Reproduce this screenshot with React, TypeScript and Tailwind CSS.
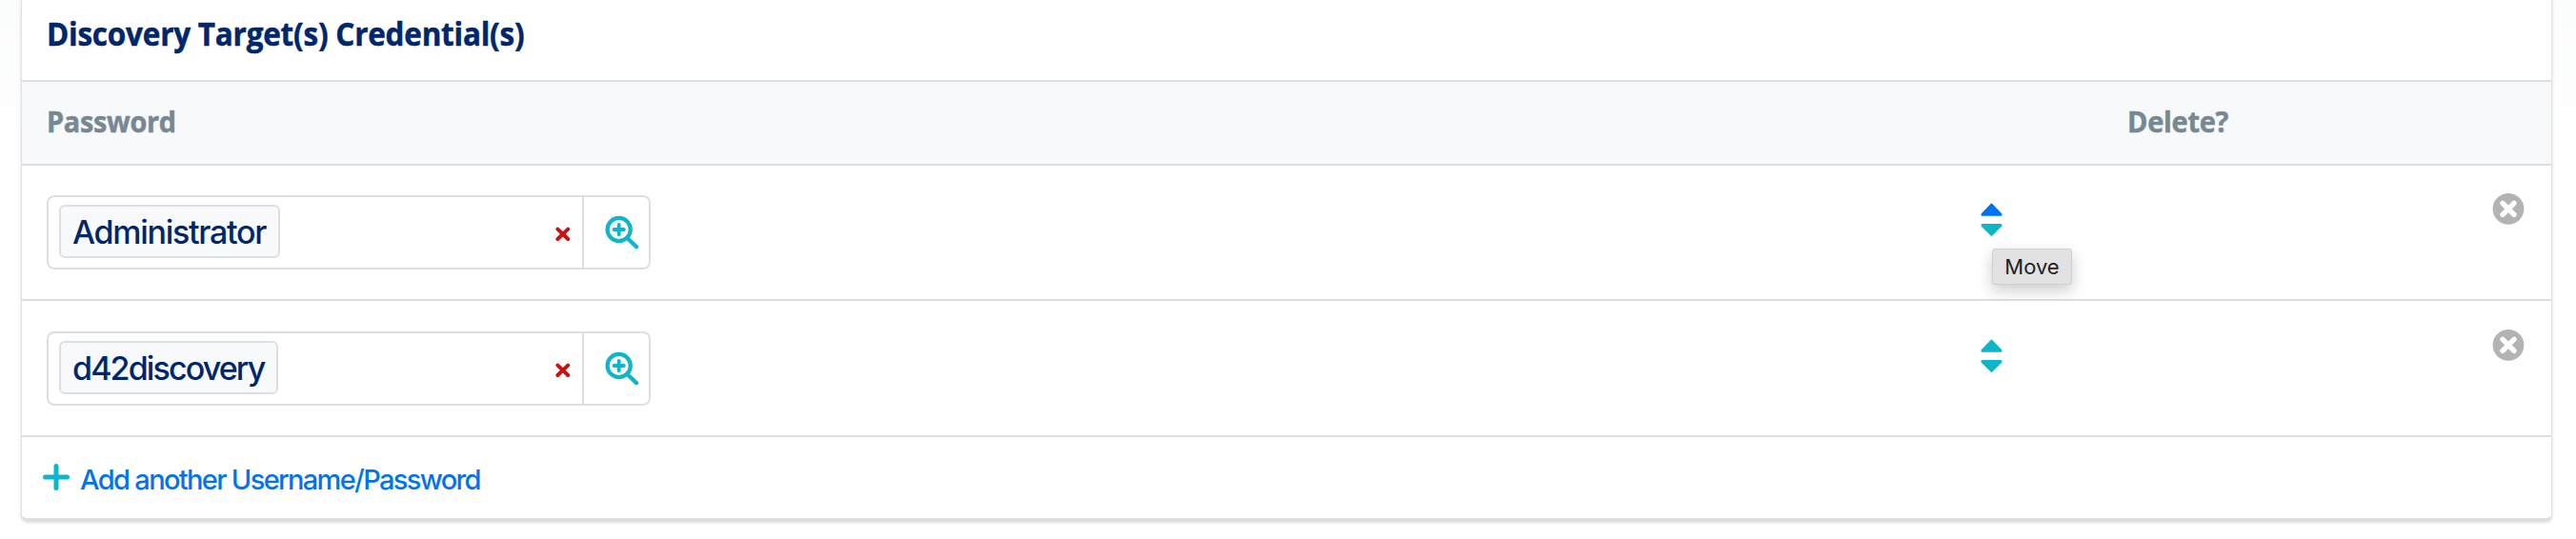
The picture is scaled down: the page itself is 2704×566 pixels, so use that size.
import React from "react";

const columns = "grid grid-cols-[2056px_154px_1fr]";

function SearchPlusIcon() {
  return (
    <svg width="36" height="36" viewBox="0 0 36 36" fill="none" stroke="#0db6c8" strokeLinecap="round">
      <circle cx="14.7" cy="15" r="12.1" strokeWidth="4.2" />
      <path d="M24 24.5 L33 33.2" strokeWidth="4.4" />
      <path d="M14.7 9.8 V20.2 M9.5 15 H19.9" strokeWidth="3.8" />
    </svg>
  );
}

function RemoveIcon() {
  return (
    <svg width="16" height="16" viewBox="0 0 16 16" fill="none" stroke="#cb1012" strokeWidth="4" strokeLinecap="round">
      <path d="M2.4 2.6 L13.2 13 M13.2 2.6 L2.4 13" />
    </svg>
  );
}

function SortIcon({ active }: { active?: boolean }) {
  const up = active ? "#0073ef" : "#0db6c8";
  return (
    <svg width="24" height="36" viewBox="0 0 24 36" strokeWidth="3" strokeLinejoin="round">
      <path d="M1.9 12.3 L11.5 2.2 L21.1 12.3 Z" fill={up} stroke={up} />
      <path d="M1.9 23.6 L11.5 33.2 L21.1 23.6 Z" fill="#0db6c8" stroke="#0db6c8" />
    </svg>
  );
}

function DeleteIcon() {
  return (
    <svg width="34" height="34" viewBox="0 0 34 34" fill="none">
      <circle cx="17" cy="17.3" r="16.4" fill="#b3b3b3" />
      <path d="M11 11.3 L23 23.3 M23 11.3 L11 23.3" stroke="#ffffff" strokeWidth="5.4" strokeLinecap="round" />
    </svg>
  );
}

function CredentialRow({ name, tracking, first }: { name: string; tracking: string; first?: boolean }) {
  return (
    <div className={`${columns} border-b-2 border-[#dce0e4] ${first ? "h-[142px] pt-[31px]" : "h-[143px] pt-[32px]"}`}>
      <div className="pl-[26px]">
        <div className="flex h-[78px] w-[634px] rounded-[8px] border-2 border-[#dce0e4] bg-white">
          <div className="flex flex-1 items-start justify-between border-r-2 border-[#dce0e4] pt-2 pr-[12px] pl-[11px]">
            <span className={`h-[56px] rounded-[6px] border-2 border-[#dce0e4] bg-[#f8f9fb] pr-[13px] pl-[12px] font-[Inter,sans-serif] text-[34px] leading-[54px] font-medium whitespace-nowrap text-[#00266b] ${tracking}`}>
              {name}
            </span>
            <button className="mt-[23px]" aria-label="Remove">
              <RemoveIcon />
            </button>
          </div>
          <button className="flex w-[68px] items-start pt-[19px] pl-[22px]" aria-label="Look up">
            <SearchPlusIcon />
          </button>
        </div>
      </div>
      <div className="relative pt-2">
        <SortIcon active={first} />
        {first && (
          <div className="absolute top-[56px] left-[12px] h-[38px] w-[84px] rounded-[3px] border border-[#cfcfcf] bg-[#e2e2e2] text-center font-[Inter,sans-serif] text-[22px] leading-[36px] text-[#1f1f1f] shadow-[0_6px_16px_rgba(0,0,0,0.2)]">
            Move
          </div>
        )}
      </div>
      <div className="-mt-[3px] flex items-start justify-end pr-[28px]">
        <DeleteIcon />
      </div>
    </div>
  );
}

export default function App() {
  return (
    <div className="h-[566px] w-[2704px] overflow-hidden bg-linear-to-b from-[#fbfcfc] to-white to-30% pl-[23px]">
      <section className="h-[547px] w-[2655px] rounded-b-[6px] border-b-3 border-[#dcdee1] bg-white shadow-[0_0_0_1px_#dfe1e4,0_1px_4px_rgba(0,0,0,0.2)]">
        <h2 className="h-[86px] border-b-2 border-[#dce0e4] pl-[26px] font-['Open_Sans',sans-serif] text-[34px] leading-[70px] font-bold tracking-[-0.23px] text-[#00266b] [-webkit-text-stroke:0.5px_#00266b]">
          <span className="inline-block origin-left scale-x-[0.925]">Discovery Target(s) Credential(s)</span>
        </h2>
        <div className={`${columns} h-[88px] border-b-2 border-[#dce0e4] bg-[#f8f9fb] font-['Open_Sans',sans-serif] text-[31px] leading-[82px] font-bold tracking-[-0.3px] text-[#778892] [-webkit-text-stroke:0.5px_#778892]`}>
          <div className="pl-[26px]">
            <span className="inline-block origin-left scale-x-[0.93]">Password</span>
          </div>
          <div />
          <div>
            <span className="inline-block origin-left scale-x-[0.935]">Delete?</span>
          </div>
        </div>
        <CredentialRow name="Administrator" tracking="tracking-[-1.28px]" first />
        <CredentialRow name="d42discovery" tracking="tracking-[-1.87px]" />
        <a className="flex items-start pl-[21px] font-[Inter,sans-serif] text-[29px] leading-[85px] font-medium tracking-[-1.65px] text-[#0073ef]">
          <svg className="mt-[27px] mr-[10px]" width="30" height="30" viewBox="0 0 30 30" fill="none" stroke="#0db6c8" strokeWidth="5" strokeLinecap="round">
            <path d="M15 3.5 V26.5 M3.5 15 H26.5" />
          </svg>
          <span className="pt-[2px]">Add another Username/Password</span>
        </a>
      </section>
    </div>
  );
}
